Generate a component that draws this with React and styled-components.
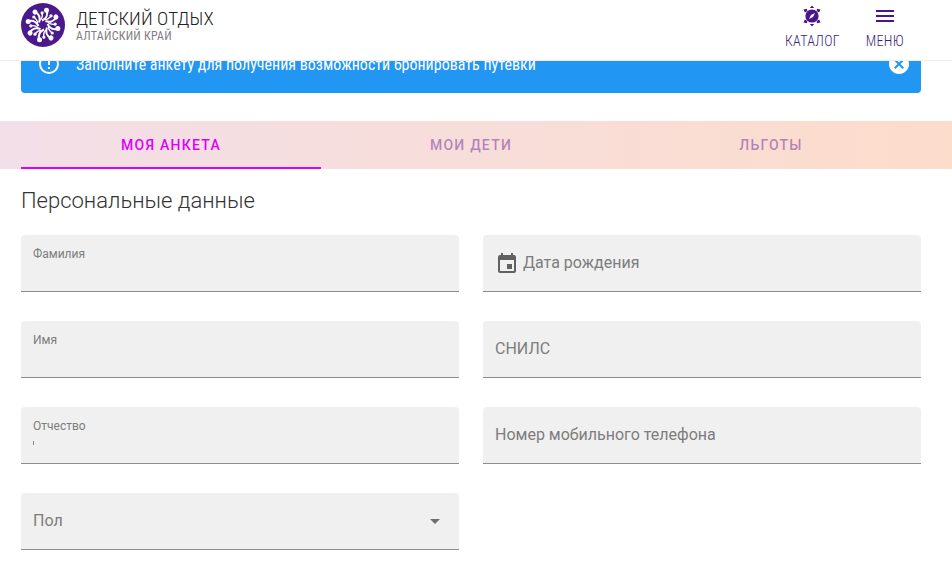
import React from 'react';
import styled, { createGlobalStyle } from 'styled-components';

const GlobalStyle = createGlobalStyle`
  html, body {
    margin: 0;
    background: #fff;
    font-family: Roboto, 'Liberation Sans', sans-serif;
  }
`;

const Logo = () => (
  <LogoSvg viewBox='0 0 44 44'>
    <circle cx='22' cy='22' r='22' fill='#4a1a8c' />
    {[0, 45, 90, 135, 180, 225, 270, 315].map((deg) => (
      <g key={deg} transform={`rotate(${deg} 22 22)`}>
        <path d='M21 17.5 C25 15.5 27.5 11.5 25.5 7' stroke='#fff' strokeWidth='2.1' fill='none' />
        <circle cx='25.5' cy='7.2' r='2.5' fill='#fff' />
        <circle cx='30' cy='12.8' r='1.6' fill='#fff' />
        <path d='M23.5 16.5 C26 16.5 28.5 15 30 12.8' stroke='#fff' strokeWidth='1.4' fill='none' />
      </g>
    ))}
  </LogoSvg>
);

const CatalogIcon = () => (
  <NavSvg viewBox='0 0 24 24'>
    <circle cx='12' cy='12' r='6.6' fill='#4a148c' />
    <path d='M15 9 L13 13 L9 15 L11 11 Z' fill='#fff' />
    <path
      d='M12 1.5l2.2 2.4H9.8zM12 22.5l-2.2-2.4h4.4zM3.6 5.6l3.2-.8.6 2.2-2.6 1.6zM20.4 5.6l-1.2 3-2.6-1.6.6-2.2zM3.6 18.4l1.2-3 2.6 1.6-.6 2.2zM20.4 18.4l-3.2.8-.6-2.2 2.6-1.6z'
      fill='#4a148c'
    />
  </NavSvg>
);

const MenuIcon = () => (
  <NavSvg viewBox='0 0 24 24'>
    <path d='M3 6h18v2H3zM3 11h18v2H3zM3 16h18v2H3z' fill='#4a148c' />
  </NavSvg>
);

const AlertIcon = () => (
  <BannerSvg viewBox='0 0 24 24'>
    <path
      d='M11 15h2v2h-2zm0-8h2v6h-2zm1-5C6.47 2 2 6.5 2 12a10 10 0 0 0 20 0A10 10 0 0 0 12 2zm0 18a8 8 0 1 1 0-16 8 8 0 0 1 0 16z'
      fill='#fff'
    />
  </BannerSvg>
);

const CloseIcon = () => (
  <BannerSvg viewBox='0 0 24 24'>
    <path
      d='M12 2C6.47 2 2 6.47 2 12s4.47 10 10 10 10-4.47 10-10S17.53 2 12 2zm5 13.59L15.59 17 12 13.41 8.41 17 7 15.59 10.59 12 7 8.41 8.41 7 12 10.59 15.59 7 17 8.41 13.41 12z'
      fill='#fff'
    />
  </BannerSvg>
);

const CalendarIcon = () => (
  <FieldIcon viewBox='0 0 24 24'>
    <path
      d='M19 4h-1V2h-2v2H8V2H6v2H5a2 2 0 0 0-2 2v14a2 2 0 0 0 2 2h14a2 2 0 0 0 2-2V6a2 2 0 0 0-2-2zm0 16H5V9h14zm-7-7h5v5h-5z'
      fill='#616161'
    />
  </FieldIcon>
);

const Field = ({ label, floated, caret, calendar, select }) => (
  <FieldBox>
    {calendar && <CalendarIcon />}
    <FieldLabel $floated={floated}>{label}</FieldLabel>
    {caret && <CaretMark />}
    {select && <Caret />}
  </FieldBox>
);

const App = () => (
  <>
    <GlobalStyle />
    <Header>
      <Brand>
        <Logo />
        <BrandText>
          <BrandTitle>ДЕТСКИЙ ОТДЫХ</BrandTitle>
          <BrandSub>АЛТАЙСКИЙ КРАЙ</BrandSub>
        </BrandText>
      </Brand>
      <Nav>
        <NavItem>
          <CatalogIcon />
          <NavLabel>КАТАЛОГ</NavLabel>
        </NavItem>
        <NavItem>
          <MenuIcon />
          <NavLabel>МЕНЮ</NavLabel>
        </NavItem>
      </Nav>
    </Header>
    <Main>
      <Banner>
        <AlertIcon />
        <BannerText>Заполните анкету для получения возможности бронировать путевки</BannerText>
        <CloseIcon />
      </Banner>
      <Tabs>
        <Tab $active>МОЯ АНКЕТА</Tab>
        <Tab>МОИ ДЕТИ</Tab>
        <Tab>ЛЬГОТЫ</Tab>
      </Tabs>
      <Content>
        <Heading>Персональные данные</Heading>
        <Form>
          <Field label='Фамилия' floated />
          <Field label='Дата рождения' calendar />
          <Field label='Имя' floated />
          <Field label='СНИЛС' />
          <Field label='Отчество' floated caret />
          <Field label='Номер мобильного телефона' />
          <Field label='Пол' select />
        </Form>
      </Content>
    </Main>
  </>
);

const Header = styled.header`
  position: fixed;
  top: 0;
  left: 0;
  right: 0;
  z-index: 5;
  height: 61px;
  box-sizing: border-box;
  padding: 0 48px 0 21px;
  display: flex;
  align-items: center;
  justify-content: space-between;
  background: #fff;
  border-bottom: 1px solid #eee;
`;

const Brand = styled.div`
  display: flex;
  align-items: center;
  gap: 11px;
  margin-top: -11px;
`;

const LogoSvg = styled.svg`
  width: 44px;
  height: 44px;
  display: block;
`;

const BrandText = styled.div`
  display: flex;
  flex-direction: column;
  margin-top: 2px;
`;

const BrandTitle = styled.div`
  font-size: 19px;
  line-height: 21px;
  font-weight: 300;
  color: #212121;
  font-stretch: 75%;
  letter-spacing: 0.1px;
`;

const BrandSub = styled.div`
  font-size: 12px;
  line-height: 15px;
  color: #808080;
  font-stretch: 75%;
  letter-spacing: 0.25px;
`;

const Nav = styled.nav`
  display: flex;
  gap: 26px;
  margin-top: -8px;
`;

const NavItem = styled.div`
  display: flex;
  flex-direction: column;
  align-items: center;
  gap: 5px;
`;

const NavSvg = styled.svg`
  width: 24px;
  height: 24px;
  display: block;
`;

const NavLabel = styled.span`
  font-size: 14px;
  line-height: 16px;
  font-weight: 300;
  color: #3c1f7a;
  font-stretch: 75%;
  letter-spacing: 0.3px;
`;

const Main = styled.main`
  padding-top: 35px;
`;

const Banner = styled.div`
  margin: 0 31px 28px 21px;
  height: 58px;
  box-sizing: border-box;
  padding: 0 10px 0 16px;
  display: flex;
  align-items: center;
  background: #2196f3;
  border-radius: 4px;
`;

const BannerSvg = styled.svg`
  width: 24px;
  height: 24px;
  flex: none;
`;

const BannerText = styled.div`
  flex: 1;
  margin: 1px 0 0 15px;
  font-size: 16px;
  line-height: 20px;
  font-weight: 400;
  font-stretch: 75%;
  color: #fff;
`;

const Tabs = styled.div`
  display: flex;
  height: 48px;
  padding: 0 31px 0 21px;
  background: linear-gradient(90deg, #f3dfe8, #fcdccb);
`;

const Tab = styled.div`
  width: 300px;
  box-sizing: border-box;
  padding-top: 2px;
  display: flex;
  align-items: center;
  justify-content: center;
  font-size: 14px;
  font-weight: 500;
  letter-spacing: 1.25px;
  color: ${(p) => (p.$active ? '#df00fb' : 'rgba(110, 40, 160, 0.5)')};
  border-bottom: 2px solid ${(p) => (p.$active ? '#df00fb' : 'transparent')};
`;

const Content = styled.div`
  padding: 19px 31px 29px 21px;
`;

const Heading = styled.h2`
  margin: 0 0 21px;
  font-size: 22px;
  line-height: 26px;
  font-weight: 300;
  color: #333;
`;

const Form = styled.div`
  display: grid;
  grid-template-columns: 438px 438px;
  column-gap: 24px;
  row-gap: 29px;
`;

const FieldBox = styled.div`
  position: relative;
  height: 57px;
  box-sizing: border-box;
  padding: 0 12px;
  display: flex;
  align-items: center;
  background: #f0f0f0;
  border-bottom: 1px solid #8c8c8c;
  border-radius: 4px 4px 0 0;
`;

const FieldLabel = styled.label`
  color: #7d7d7d;
  font-size: ${(p) => (p.$floated ? '12px' : '16px')};
  line-height: 16px;
  align-self: ${(p) => (p.$floated ? 'flex-start' : 'center')};
  margin-top: ${(p) => (p.$floated ? '11px' : '0')};
`;

const FieldIcon = styled.svg`
  width: 24px;
  height: 24px;
  margin: 0 4px 0 0;
  flex: none;
`;

const CaretMark = styled.span`
  position: absolute;
  left: 12px;
  top: 34px;
  width: 1px;
  height: 4px;
  background: #888;
`;

const Caret = styled.span`
  position: absolute;
  right: 19px;
  top: 26px;
  width: 0;
  height: 0;
  border-left: 5px solid transparent;
  border-right: 5px solid transparent;
  border-top: 5px solid #6e6e6e;
`;

export default App;
